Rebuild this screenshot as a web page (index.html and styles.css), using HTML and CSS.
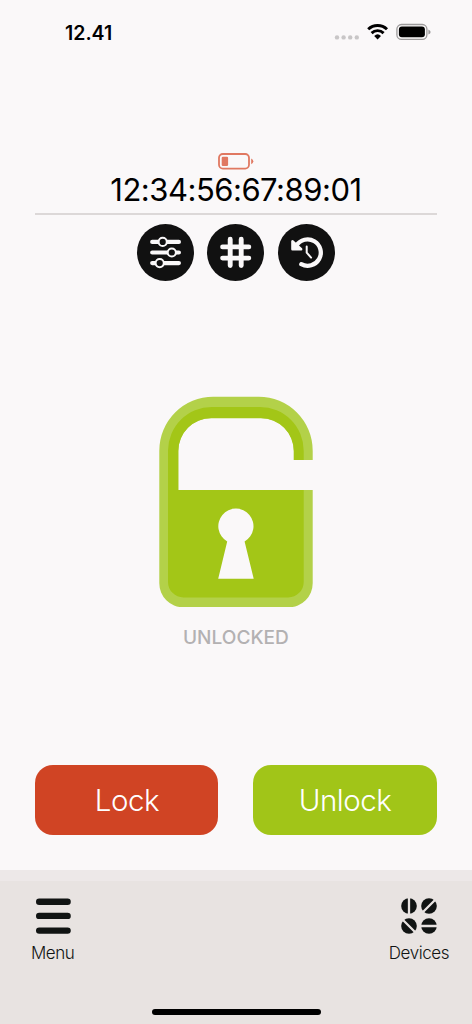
FILE: index.html
```html
<!DOCTYPE html>
<html lang="en">
  <head>
    <meta charset="utf-8">
    <meta name="viewport" content="width=device-width, initial-scale=1">
    <title>Lock</title>
    <link rel="stylesheet" href="styles.css">
  </head>
  <body>
    <div class="screen">
      <header class="status">
        <span class="time">12.41</span>
        <svg class="status-icons" width="98" height="20" viewBox="0 0 98 20">
          <g fill="#c8c6c7">
            <circle cx="3" cy="15.4" r="2.2"/>
            <circle cx="9.6" cy="15.4" r="2.2"/>
            <circle cx="16.2" cy="15.4" r="2.2"/>
            <circle cx="22.8" cy="15.4" r="2.2"/>
          </g>
          <g fill="none" stroke="#000" stroke-width="2.9">
            <path d="M34.2 7.3a13.5 13.5 0 0 1 18.8 0"/>
            <path d="M37.6 11.1a8.6 8.6 0 0 1 12 0"/>
          </g>
          <path d="M40.2 13.9a5 5 0 0 1 6.8 0l-3.4 3.5z"/>
          <rect x="62.9" y="2.5" width="30" height="14.8" rx="4.6" fill="none" stroke="#9c9a9b" stroke-width="1.3"/>
          <rect x="64.9" y="4.5" width="26" height="10.8" rx="3"/>
          <path d="M94.4 7.4q2.2 1 2.2 2.5t-2.2 2.5z" fill="#9c9a9b"/>
        </svg>
      </header>

      <main>
        <section class="device">
          <svg class="battery" width="36" height="17" viewBox="0 0 36 17">
            <rect x="1" y="1" width="30" height="14.6" rx="3.8" fill="none" stroke="#e07861" stroke-width="1.8"/>
            <rect x="3.7" y="3.8" width="6.4" height="9.2" rx="1.2" fill="#e07861"/>
            <path d="M33.2 5.4q2.1 1.1 2.1 2.9t-2.1 2.9z" fill="#e07861"/>
          </svg>
          <div class="address">12:34:56:67:89:01</div>
        </section>

        <nav class="tools">
          <a class="tool">
            <svg width="57" height="57" viewBox="0 0 57 57">
              <g stroke="#faf8f9" stroke-width="4.2" stroke-linecap="round">
                <path d="M15.2 17.9h26.7M15.2 28.5h26.7M15.2 39.1h26.7"/>
              </g>
              <g fill="#111" stroke="#faf8f9" stroke-width="2">
                <circle cx="25.7" cy="17.9" r="4.1"/>
                <circle cx="34.8" cy="28.5" r="4.1"/>
                <circle cx="22.7" cy="39.1" r="4.1"/>
              </g>
            </svg>
          </a>
          <a class="tool">
            <svg width="57" height="57" viewBox="0 0 57 57">
              <path d="M23.2 15.3v26.2M34.2 15.3v26.2M15.6 22.9h26.2M15.6 34.1h26.2" fill="none" stroke="#faf8f9" stroke-width="4.9" stroke-linecap="round"/>
            </svg>
          </a>
          <a class="tool">
            <svg width="57" height="57" viewBox="0 0 57 57">
              <path d="M18.4 21.6A13.2 13.2 0 1 1 23.3 40.2" fill="none" stroke="#faf8f9" stroke-width="4.3" stroke-linecap="round"/>
              <path d="M14.4 17.2v8h8.8z" fill="#faf8f9" stroke="#faf8f9" stroke-width="2.4" stroke-linejoin="round"/>
              <path d="M28.7 22.5v6.2l4.4 4.9" fill="none" stroke="#faf8f9" stroke-width="2" stroke-linecap="round" stroke-linejoin="round"/>
            </svg>
          </a>
        </nav>

        <section class="state">
          <svg class="padlock" width="155" height="211" viewBox="-1 0 155 211">
            <!-- rim -->
            <path d="M.3 54.7a54 54 0 0 1 54-54h45.4a54 54 0 0 1 54 54V64H135V55a33 33 0 0 0-33-33H52.3a33 33 0 0 0-33 33v39h134.4v93.3a24 24 0 0 1-24 24H24.3a24 24 0 0 1-24-24z" fill="#b3d149"/>
            <!-- body -->
            <path d="M9 54.7a43.8 43.8 0 0 1 43.8-43.8h48.1a43.8 43.8 0 0 1 43.8 43.8V64H134.7V55a32.8 32.8 0 0 0-32.8-32.8H52.1A32.8 32.8 0 0 0 19.3 55v39h125.4v91.9a15.5 15.5 0 0 1-15.5 15.5H24.5A15.5 15.5 0 0 1 9 185.9z" fill="#a3c617"/>
            <!-- keyhole -->
            <path d="M68.2 145.5a17.6 17.6 0 1 1 17.4 0l9.1 37.2H59.2z" fill="#faf8f9"/>
          </svg>
          <div class="state-label">UNLOCKED</div>
        </section>

        <div class="actions">
          <button class="btn btn-lock">Lock</button>
          <button class="btn btn-unlock">Unlock</button>
        </div>
      </main>

      <footer class="tabbar">
        <div class="tabs">
          <a class="tab tab-menu">
            <svg width="36" height="38" viewBox="0 0 36 38">
              <path d="M4.2 4.8h28.4M4.2 18.9h28.4M4.2 33.6h28.4" stroke="#111413" stroke-width="6.4" stroke-linecap="round"/>
            </svg>
            <span>Menu</span>
          </a>
          <a class="tab tab-devices">
            <svg width="36" height="38" viewBox="0 0 36 38">
              <g fill="#111413">
                <circle cx="8" cy="9" r="7.8"/>
                <circle cx="28" cy="9" r="7.8"/>
                <circle cx="8" cy="29" r="7.8"/>
                <circle cx="28" cy="29" r="7.8"/>
              </g>
              <path d="M8 0v18M22 15l12-12M2 23l12 12M19.5 29h17" stroke="#e8e3e1" stroke-width="2.3"/>
            </svg>
            <span>Devices</span>
          </a>
        </div>
        <div class="home"></div>
      </footer>
    </div>
  </body>
</html>
```
FILE: styles.css
```css
body {
  margin: 0;
  background-color: #faf8f9;
  color: #000;
  font-family: Inter, "Liberation Sans", sans-serif;
}
svg {
  display: block;
}
.screen {
  display: flex;
  flex-direction: column;
  height: 1024px;
  overflow: hidden;
}
.status {
  display: flex;
  justify-content: space-between;
  height: 131px;
  padding: 22px 40px 0 65px;
}
.time {
  font-size: 19.5px;
  line-height: 22px;
  font-weight: 600;
}
main {
  flex: 1;
  padding: 0 35.5px 0 35.4px;
}
.device {
  display: flex;
  flex-direction: column;
  align-items: center;
  border-bottom: 2px solid #dcd8d8;
}
.address {
  height: 43px;
  font-size: 31px;
  line-height: 40px;
  letter-spacing: -0.5px;
  font-weight: 400;
}
.tools {
  display: flex;
  justify-content: center;
  gap: 13.2px;
  margin-top: 9px;
}
.tool {
  width: 57px;
  height: 57px;
  border-radius: 50%;
  background-color: #111;
}
.state {
  display: flex;
  flex-direction: column;
  align-items: center;
  margin-top: 115px;
}
.state-label {
  margin-top: 18px;
  font-size: 19.1px;
  line-height: 25px;
  font-weight: 500;
  color: #b3b1b2;
}
.actions {
  display: flex;
  gap: 35px;
  margin-top: 115px;
}
.btn {
  flex: 1;
  height: 70px;
  padding: 0;
  border: 0;
  border-radius: 18px;
  color: #fff;
  font-family: inherit;
  font-size: 29.5px;
  font-weight: 300;
  letter-spacing: -0.5px;
}
.btn-lock {
  background-color: #d04424;
}
.btn-unlock {
  background-color: #a1c518;
}
.tabbar {
  display: flex;
  flex-direction: column;
  justify-content: space-between;
  align-items: center;
  box-sizing: border-box;
  height: 154px;
  padding-bottom: 9px;
  border-top: 11px solid #ede8e8;
  background-color: #e8e3e1;
}
.tabs {
  display: flex;
  justify-content: space-between;
  box-sizing: border-box;
  width: 100%;
  padding: 16px 23px 0 31px;
}
.tab {
  display: flex;
  flex-direction: column;
  align-items: center;
  gap: 7px;
  font-size: 17px;
  line-height: 23px;
  font-weight: 300;
  letter-spacing: -0.45px;
  color: #111413;
}
.home {
  width: 169px;
  height: 6px;
  border-radius: 3px;
  background-color: #000;
}
```
